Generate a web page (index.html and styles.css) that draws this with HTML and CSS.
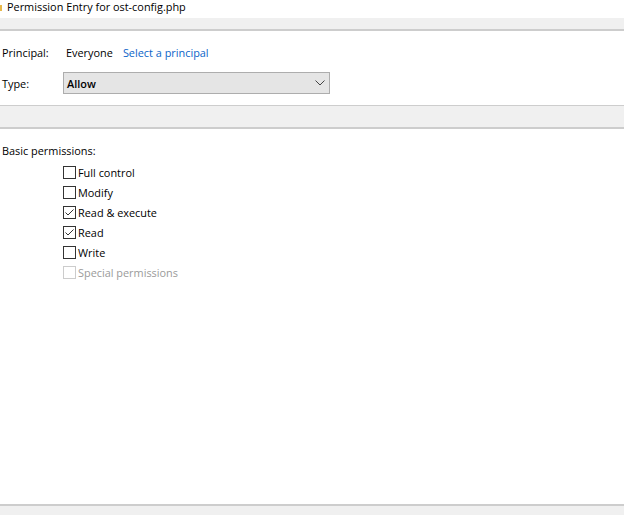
FILE: index.html
```html
<!DOCTYPE html>
<html>
<head>
<meta charset="utf-8">
<link rel="stylesheet" href="styles.css">
</head>
<body>
<div class="window">
  <div class="titlebar">
    <span class="ticon"></span>
    <span class="ttext">Permission Entry for ost-config.php</span>
  </div>
  <div class="band top"></div>
  <div class="content">
    <div class="row principal">
      <span class="label">Principal:</span>
      <span class="value">Everyone</span>
      <span class="link">Select a principal</span>
    </div>
    <div class="row type">
      <span class="label">Type:</span>
      <div class="select">
        <span>Allow</span>
        <svg class="chev" width="10" height="6" viewBox="0 0 10 6"><path d="M0.5 0.5 L5 5 L9.5 0.5" fill="none" stroke="#444" stroke-width="1"/></svg>
      </div>
    </div>
  </div>
  <div class="band mid"></div>
  <div class="perms">
    <div class="heading">Basic permissions:</div>
    <ul class="checks">
      <li><span class="box"></span>Full control</li>
      <li><span class="box"></span>Modify</li>
      <li><span class="box checked"><svg width="11" height="11" viewBox="0 0 11 11"><path d="M1.5 5.5 L4 8 L9.5 2.5" fill="none" stroke="#333" stroke-width="1"/></svg></span>Read &amp; execute</li>
      <li><span class="box checked"><svg width="11" height="11" viewBox="0 0 11 11"><path d="M1.5 5.5 L4 8 L9.5 2.5" fill="none" stroke="#333" stroke-width="1"/></svg></span>Read</li>
      <li><span class="box"></span>Write</li>
      <li class="disabled"><span class="box"></span>Special permissions</li>
    </ul>
  </div>
  <div class="band bottom"></div>
</div>
</body>
</html>
```
FILE: styles.css
```css
html, body {
  margin: 0;
  padding: 0;
  background: #fff;
}
body {
  font-family: "Open Sans", "Noto Sans", "Liberation Sans", sans-serif;
  font-size: 10.9px;
  color: #000;
  width: 624px;
  height: 515px;
  overflow: hidden;
}
.window {
  display: flex;
  flex-direction: column;
  height: 515px;
}
.titlebar {
  height: 18px;
  display: flex;
  align-items: flex-start;
}
.ticon {
  width: 2px;
  height: 6px;
  margin-top: 5px;
  background: #e8b84a;
}
.ttext {
  margin-left: 5px;
  line-height: 13px;
  margin-top: 0;
}
.band {
  background: #f0f0f0;
}
.band.top {
  height: 11px;
  border-bottom: 2px solid #cdcdcd;
}
.content {
  height: 74px;
  display: flex;
  flex-direction: column;
}
.row {
  display: flex;
  align-items: center;
}
.label {
  width: 61px;
  padding-left: 2px;
}
.principal {
  margin-top: 13px;
  height: 16px;
}
.principal .value {
  margin-left: 3px;
}
.link {
  color: #0a64c8;
  margin-left: 10px;
}
.type {
  margin-top: 12px;
  height: 22px;
}
.select {
  box-sizing: border-box;
  width: 267px;
  height: 22px;
  background: #e5e5e5;
  border: 1px solid #adadad;
  display: flex;
  align-items: center;
  justify-content: space-between;
  padding: 0 4px 0 3px;
  font-weight: 600;
}
.band.mid {
  height: 21px;
  border-top: 1px solid #cdcdcd;
  border-bottom: 2px solid #cdcdcd;
}
.perms {
  flex: 1;
  display: flex;
  flex-direction: column;
}
.heading {
  padding-left: 2px;
  margin-top: 14px;
  line-height: 16px;
}
.checks {
  list-style: none;
  margin: 3px 0 0 63px;
  padding: 0;
}
.checks li {
  display: flex;
  align-items: center;
  height: 20px;
}
.box {
  box-sizing: border-box;
  width: 13px;
  height: 13px;
  border: 1px solid #333;
  background: #fff;
  margin-right: 2px;
  display: flex;
  align-items: center;
  justify-content: center;
}
.disabled {
  color: #9a9a9a;
}
.disabled .box {
  border-color: #cccccc;
}
.band.bottom {
  height: 9px;
  border-top: 2px solid #cdcdcd;
}
```
